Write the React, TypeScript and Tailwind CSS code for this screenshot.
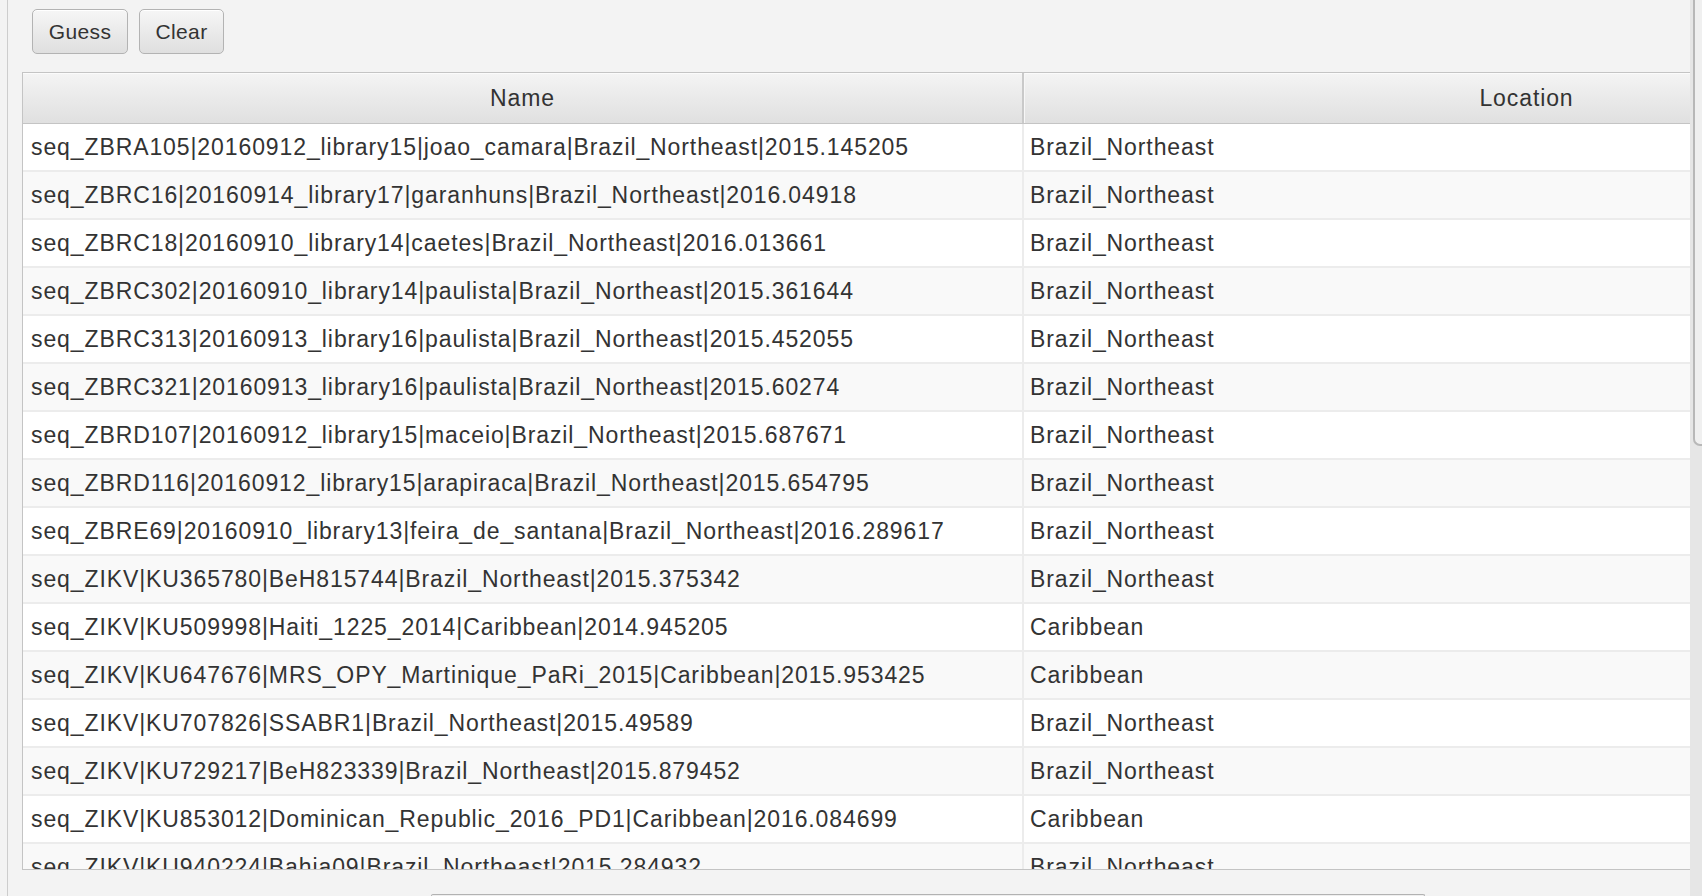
import React from 'react';

interface SequenceRow {
  name: string;
  location: string;
}

const rows: SequenceRow[] = [
  { name: 'seq_ZBRA105|20160912_library15|joao_camara|Brazil_Northeast|2015.145205', location: 'Brazil_Northeast' },
  { name: 'seq_ZBRC16|20160914_library17|garanhuns|Brazil_Northeast|2016.04918', location: 'Brazil_Northeast' },
  { name: 'seq_ZBRC18|20160910_library14|caetes|Brazil_Northeast|2016.013661', location: 'Brazil_Northeast' },
  { name: 'seq_ZBRC302|20160910_library14|paulista|Brazil_Northeast|2015.361644', location: 'Brazil_Northeast' },
  { name: 'seq_ZBRC313|20160913_library16|paulista|Brazil_Northeast|2015.452055', location: 'Brazil_Northeast' },
  { name: 'seq_ZBRC321|20160913_library16|paulista|Brazil_Northeast|2015.60274', location: 'Brazil_Northeast' },
  { name: 'seq_ZBRD107|20160912_library15|maceio|Brazil_Northeast|2015.687671', location: 'Brazil_Northeast' },
  { name: 'seq_ZBRD116|20160912_library15|arapiraca|Brazil_Northeast|2015.654795', location: 'Brazil_Northeast' },
  { name: 'seq_ZBRE69|20160910_library13|feira_de_santana|Brazil_Northeast|2016.289617', location: 'Brazil_Northeast' },
  { name: 'seq_ZIKV|KU365780|BeH815744|Brazil_Northeast|2015.375342', location: 'Brazil_Northeast' },
  { name: 'seq_ZIKV|KU509998|Haiti_1225_2014|Caribbean|2014.945205', location: 'Caribbean' },
  { name: 'seq_ZIKV|KU647676|MRS_OPY_Martinique_PaRi_2015|Caribbean|2015.953425', location: 'Caribbean' },
  { name: 'seq_ZIKV|KU707826|SSABR1|Brazil_Northeast|2015.49589', location: 'Brazil_Northeast' },
  { name: 'seq_ZIKV|KU729217|BeH823339|Brazil_Northeast|2015.879452', location: 'Brazil_Northeast' },
  { name: 'seq_ZIKV|KU853012|Dominican_Republic_2016_PD1|Caribbean|2016.084699', location: 'Caribbean' },
  { name: 'seq_ZIKV|KU940224|Bahia09|Brazil_Northeast|2015.284932', location: 'Brazil_Northeast' },
];

const FxButton: React.FC<{ label: string; width: string }> = ({ label, width }) => (
  <button
    className={`${width} h-[45px] rounded-[5px] border border-[#b3b3b3] bg-gradient-to-b from-[#f6f6f6] to-[#dfdfdf] shadow-[inset_0_1px_0_#ffffff] text-[21px] tracking-[0.4px] text-[#333333] flex items-center justify-center`}
  >
    {label}
  </button>
);

const App: React.FC = () => {
  return (
    <div className="w-[1702px] h-[896px] overflow-hidden flex bg-[#f3f3f3] font-['Liberation_Sans',Arial,sans-serif]">
      <div className="w-[1690px] h-full flex shrink-0">
        <div className="w-[7px] shrink-0" />

        <div className="flex-1 min-w-0 flex flex-col border-l border-[#cdcdcd]">
          {/* toolbar */}
          <div className="flex gap-[11px] pt-[9px] pl-[24px]">
            <FxButton label="Guess" width="w-[96px]" />
            <FxButton label="Clear" width="w-[85px]" />
          </div>

          {/* table */}
          <div className="ml-[14px] mt-[18px] h-[798px] flex flex-col overflow-hidden border-l border-t border-b border-[#c4c4c4] bg-white text-[23px] tracking-[0.9px] text-[#333333]">
            <div className="flex h-[51px] shrink-0 border-b border-[#c4c4c4] bg-gradient-to-b from-[#f4f4f4] to-[#e0e0e0] shadow-[inset_0_1px_0_#fbfbfb]">
              <div className="w-[1001px] shrink-0 flex items-center justify-center border-r-2 border-r-[#c9c9c9]">
                Name
              </div>
              <div className="w-[1004px] shrink-0 flex items-center justify-center border-l border-l-[#f7f7f7]">
                Location
              </div>
            </div>

            <div className="flex-1 overflow-hidden">
              {rows.map((row, index) => (
                <div
                  key={row.name}
                  className={`flex h-[48px] border-b-2 border-[#ececec] ${index % 2 === 0 ? 'bg-white' : 'bg-[#f9f9f9]'}`}
                >
                  <div className="w-[1001px] shrink-0 flex items-center pl-[8px] border-r-2 border-[#ececec] whitespace-nowrap">
                    {row.name}
                  </div>
                  <div className="w-[1004px] shrink-0 flex items-center pl-[6px] whitespace-nowrap">
                    {row.location}
                  </div>
                </div>
              ))}
            </div>
          </div>

          {/* horizontal scroll thumb, mostly below the window */}
          <div className="mt-auto ml-[423px] w-[994px] h-[2px] border-t border-x border-[#b2b2b2] rounded-t-[6px] bg-[#efefef]" />
        </div>
      </div>

      {/* vertical scrollbar */}
      <div className="w-[12px] h-full shrink-0 bg-[#e6e6e6]">
        <div className="ml-[3px] h-[446px] bg-[#f0f0f0] border-l-2 border-b-2 border-[#b8b8b8] rounded-bl-[7px]" />
      </div>
    </div>
  );
};

export default App;
